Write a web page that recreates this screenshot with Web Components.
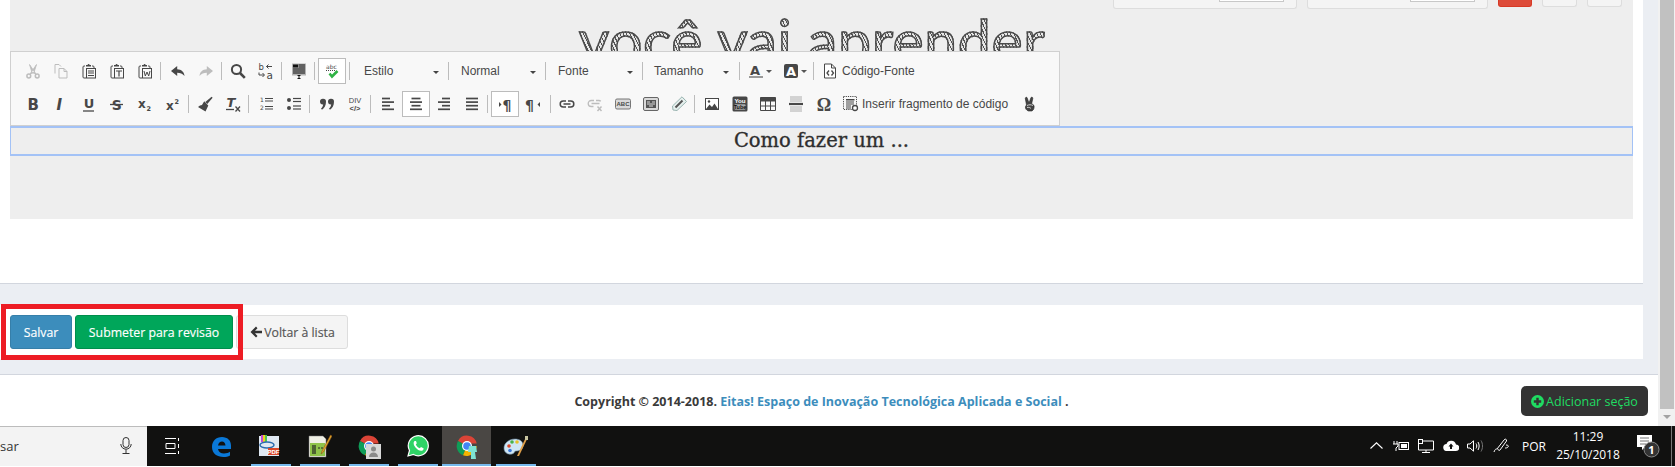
<!DOCTYPE html>
<html lang="pt"><head><meta charset="utf-8"><title>Editor</title>
<style>
html,body{margin:0;padding:0;height:467px;overflow:hidden;background:#fff}
body{font-family:"Open Sans","Noto Sans",sans-serif}
</style></head><body>
<app-shell>
  <page-scroll slot="main">
    <editor-card>
      <top-controls></top-controls>
      <big-heading>você vai aprender</big-heading>
      <editor-toolbar></editor-toolbar>
      <focus-line>Como fazer um ...</focus-line>
    </editor-card>
    <action-panel>
      <action-btn kind="primary">Salvar</action-btn>
      <action-btn kind="success">Submeter para revisão</action-btn>
      <action-btn kind="default" arrow>Voltar à lista</action-btn>
    </action-panel>
    <page-footer></page-footer>
  </page-scroll>
  <scroll-rail slot="main"></scroll-rail>
  <task-bar slot="bar"></task-bar>
</app-shell>
<script>
const T=(x,y,s,t,extra='')=>`<text x="${x}" y="${y}" font-size="${s}" fill="currentColor" stroke="none" ${extra}>${t}</text>`;
const DJ='font-family="DejaVu Sans"';
const lines=(arr,w=1.4)=>arr.map(a=>`<path d="M${a[0]} ${a[2]}H${a[1]}" stroke="currentColor" stroke-width="${a[3]||w}" fill="none"/>`).join('');
const clip=(inner)=>`<path d="M4 3H3a1 1 0 0 0-1 1v10a1 1 0 0 0 1 1h2" fill="none" stroke="currentColor"/><path d="M11 3h1a1 1 0 0 1 1 1v1" fill="none" stroke="currentColor"/><path d="M5 3.500h5V2H8.600a1 1 0 0 0-2 0H5z" fill="currentColor"/><rect x="5.500" y="5.500" width="9" height="9.500" fill="none" stroke="currentColor"/>${inner}`;
const align=(r)=>lines(r.map((v,i)=>[v[0],v[1],2.5+i*3.6]),1.7);
const ICONS={
cut:`<g fill="none" stroke="currentColor" stroke-width="1.500"><circle cx="3.800" cy="13" r="1.900"/><circle cx="12.200" cy="13" r="1.900"/></g><path d="M5 11 11.500 1.500 9 9.500zM11 11 4.500 1.500 7 9.500z" fill="currentColor" stroke="currentColor" stroke-width=".8"/>`,
copy:`<path d="M2 10.500V1.500h4l2 2M6 5.500h5l3 3v6.500H6zM11 5.500v3h3" fill="none" stroke="currentColor"/>`,
paste:clip(lines([[7,13,8],[7,13,10],[7,13,12.500]],1)),
pastet:clip(`<path d="M7 8h6M10 8v5.500" stroke="currentColor" stroke-width="1.200" fill="none"/>`),
pastew:clip(`<path d="M7 8l1.300 5 1.700-4 1.700 4L13 8" stroke="currentColor" stroke-width="1" fill="none"/>`),
undo:`<path d="M7.200 3 1 8l6.200 5V9.700c3 0 5.400.8 7.300 3.300C14.300 9 11.300 6.400 7.200 6.300z" fill="currentColor"/>`,
redo:`<path d="M8.800 3 15 8l-6.200 5V9.700c-3 0-5.400.8-7.300 3.300C1.700 9 4.700 6.400 8.800 6.300z" fill="currentColor"/>`,
find:`<circle cx="6.500" cy="6.500" r="4.600" fill="none" stroke="currentColor" stroke-width="2"/><path d="M10 10l4.800 4.800" stroke="currentColor" stroke-width="2.600"/>`,
replace:T(0.500,7,8.500,'b',DJ)+T(8.500,15.500,10.500,'a',DJ)+`<path d="M14 3.500H8.500M10.500 1.500 8.500 3.500l2 2M1 9.500v2.500h5M4.500 10l2 2-2 2" fill="none" stroke="currentColor"/>`,
select:`<rect x="1" y=".5" width="14" height="12" fill="#b4b4b4"/>`+`<rect x="2" y="1.500" width="5" height="3" fill="#111"/>`+lines([[7.500,14,2],[7.500,14,4],[2,14,6],[2,14,8],[2,14,10]],1).replace(/currentColor/g,'#111')+`<path d="M6.500 12.500h3M8 12.500v3M6.500 15.500h3" stroke="#111" fill="none"/>`,
spell:T(2,5.500,6,'abc',DJ)+`<path d="M2 7.500h10" stroke="currentColor" stroke-dasharray="1 1"/><path d="M5.500 10.500 8 13.500 13.500 8" stroke="#2fb344" stroke-width="2.600" fill="none"/>`,
bold:T(2.500,14,15,'B',DJ+' font-weight="bold"'),
italic:T(3.500,14,15,'I',DJ+' font-weight="bold" font-style="italic"'),
underline:T(2.800,12,13,'U',DJ+' font-weight="bold"')+`<path d="M2 15h11" stroke="currentColor" stroke-width="1.300"/>`,
strike:T(2.800,14,14,'S',DJ+' font-weight="bold"')+`<path d="M1 8.500h13" stroke="currentColor" stroke-width="1.300"/>`,
sub:T(1,12,12,'x',DJ+' font-weight="bold"')+T(9.500,15,6.500,'2',DJ+' font-weight="bold"'),
sup:T(1,14,12,'x',DJ+' font-weight="bold"')+T(9.500,8,6.500,'2',DJ+' font-weight="bold"'),
brush:`<path d="M14.600 .8l1 1L10.300 8 8.300 6z" fill="currentColor"/><path d="M7.200 5.300 11.300 9.400l-2.800 6L1 11l2-1.500 2-.5z" fill="currentColor"/>`,
clear:T(1.500,11,13,'T',DJ+' font-weight="bold" font-style="italic"')+`<path d="M1 13.500h8" stroke="currentColor" stroke-width="1.300"/><path d="M10.500 10.500l4.500 5M15 10.500l-4.500 5" stroke="currentColor" stroke-width="1.300"/>`,
ol:T(2,6,6,'1',DJ)+T(2,14,6,'2',DJ)+lines([[7,15,2.500],[7,15,5],[7,15,10.500],[7,15,13]],1),
ul:`<circle cx="3" cy="4" r="2" fill="currentColor"/><circle cx="3" cy="12" r="2" fill="currentColor"/>`+lines([[7,15,2.500],[7,15,5.500],[7,15,10],[7,15,13]],1.200),
quote:`<path d="M1 5.500a3 3 0 1 1 6 .3c0 3.200-1.500 6.500-4 8L2 12.500c1.300-1 2-2.500 2.200-4A3 3 0 0 1 1 5.500zM9 5.500a3 3 0 1 1 6 .3c0 3.200-1.500 6.500-4 8L10 12.500c1.300-1 2-2.500 2.200-4A3 3 0 0 1 9 5.500z" fill="currentColor"/>`,
div:`<text x="8" y="7" text-anchor="middle" font-size="7.500" font-family="Liberation Sans" fill="currentColor">DIV</text><text x="8" y="15" text-anchor="middle" font-size="7.500" font-family="Liberation Sans" font-weight="bold" fill="currentColor">&lt;/&gt;</text>`,
left:align([[2,10],[2,14],[2,10],[2,14]]),
center:align([[3.500,12.500],[2,14],[3.500,12.500],[2,14]]),
right:align([[6,14],[2,14],[6,14],[2,14]]),
justify:align([[2,14],[2,14],[2,14],[2,14]]),
ltr:`<path d="M2 6l2.500 2.500L2 11z" fill="currentColor"/>`+T(5.500,13.500,14,'¶',DJ+' font-weight="bold"'),
rtl:T(0,13.500,14,'¶',DJ+' font-weight="bold"')+`<path d="M15 6l-2.500 2.500L15 11z" fill="currentColor"/>`,
link:`<path d="M7 5H4.200a3 3 0 0 0 0 6H7M9 5h2.800a3 3 0 0 1 0 6H9M4.500 8h7" fill="none" stroke="currentColor" stroke-width="1.500"/>`,
unlink:`<path d="M7 4.500H4.200a3 3 0 0 0 0 6H6.500M9 4.500h2.800a3 3 0 0 1 2 .8M4.500 7.500h8" fill="none" stroke="currentColor" stroke-width="1.300"/><path d="M10.500 10.500l4 4.500M14.500 10.500l-4 4.500" stroke="currentColor" stroke-width="1.500"/>`,
abc:`<rect x=".5" y="3" width="15" height="10" rx="1.500" fill="#d9d9d9" stroke="#777"/><text x="8" y="10.300" text-anchor="middle" font-size="6" font-family="Liberation Sans" font-weight="bold" fill="currentColor">ABC</text>`,
box:`<rect x=".5" y="1.500" width="15" height="13" rx="1.500" fill="#d9d9d9" stroke="#666"/><rect x="3" y="4" width="10" height="8" fill="#555"/><path d="M4 6h3M9 6h3M4 8h8M6 10h4" stroke="#ddd"/>`,
pin:`<path d="M2 14 1.500 10 11 .8 15.500 5.500 6 14.500z" fill="#e6f0ee" stroke="#9ab5b2"/><path d="M4.500 11.500 11.500 4.500" stroke="#555" stroke-width="2"/><path d="M12 2l2 2" stroke="#9ab5b2"/>`,
image:`<rect x="1" y="2" width="14" height="12" fill="currentColor"/><rect x="2" y="3" width="12" height="10" fill="#fff"/><path d="M2 13l3.500-4.500L8 11l2.500-3.500L14 13z" fill="currentColor"/><circle cx="5" cy="5.500" r="1.200" fill="currentColor"/>`,
youtube:`<rect x=".5" y=".5" width="15" height="15" rx="1.500" fill="currentColor"/><rect x="2.500" y="8.300" width="11" height="5.500" rx="1" fill="#aaa"/>`+`<text x="8" y="6.500" text-anchor="middle" font-size="6.200" fill="#fff" font-family="Liberation Sans" font-weight="bold">You</text><text x="8" y="13" text-anchor="middle" font-size="5.500" fill="#111" font-family="Liberation Sans" font-weight="bold">Tube</text>`,
table:`<path d="M.5 1.500h15v13H.5z" fill="none" stroke="currentColor"/><path d="M.5 1.500h15v4H.5z" fill="currentColor"/><path d="M5.500 5v9M10.500 5v9M1 10h14" stroke="currentColor" fill="none"/>`,
hr:`<path d="M2 1h12M2 3h12M2 5h12M2 11h12M2 13h12M2 15h12" stroke="#999" stroke-width=".8" fill="none"/>`+lines([[1,15,8,2.200]]),
omega:`<text x="8" y="14.500" text-anchor="middle" font-size="18" font-family="Liberation Serif" font-weight="bold" fill="currentColor">Ω</text>`,
snippet:`<rect x=".5" y=".5" width="13" height="13" fill="none" stroke="currentColor" stroke-dasharray="1.200 1"/><rect x="3" y="3" width="8.500" height="1.500" fill="currentColor"/>`+lines([[3,11,6],[3,11,8],[3,8,10],[3,8,12]],1)+`<circle cx="12" cy="12" r="2.500" fill="#fff" stroke="currentColor" stroke-width="1.300"/>`,
peace:`<path d="M5 1.500 7 7l2-5.500c1-.7 2 0 1.800 1L9.700 7.500 12 9.500c.5 2-.3 4.500-2 5.500H6.500c-2-.5-3.500-2.500-3-4.500l1-1.500L3.300 2.500c0-1 1-1.500 1.700-1z" fill="#444" stroke="#222" stroke-width=".6"/><path d="M5 9.500c2-1 4-1 6 0M5 11.500c1.500-.5 3 0 4 1" stroke="#ccc" fill="none"/>`,
source:`<path d="M2.500 1h7l4 4v10h-11zM9.500 1v4h4" fill="#fff" stroke="currentColor"/><path d="M7 7.500 5 10l2 2.500M9.500 7.500l2 2.500-2 2.500" fill="none" stroke="currentColor" stroke-width="1.300"/>`,
fore:T(2,11.500,13,'A',DJ+' font-weight="bold"')+`<rect x="1" y="13" width="14" height="2" fill="#999"/>`,
back:`<rect x="1" y="1" width="14" height="14" rx="2" fill="currentColor"/><text x="8" y="12.500" text-anchor="middle" font-size="13" font-family="DejaVu Sans" font-weight="bold" fill="#fff">A</text>`
};
const def=(name,css,html,init)=>{customElements.define(name,class extends HTMLElement{
  connectedCallback(){ if(this.shadowRoot)return; const r=this.attachShadow({mode:'open'});
    r.innerHTML=`<style>${css}</style>`+(typeof html==='function'?html(this):html); init&&init(this,r);} });};

def('tool-btn',`:host{display:flex;align-items:center;justify-content:center;gap:4px;height:26px;min-width:28px;box-sizing:border-box;color:#474747;font:12px "Liberation Sans",sans-serif;flex:none}
:host([off]){color:#bdbdbd}
:host([on]){background:#fff;box-shadow:inset 0 0 0 1px #bcbcbc}
:host([arrow]){width:35px;justify-content:flex-start;padding-left:7px;gap:2px}
:host([label]){padding:0 6px}
svg{width:16px;height:16px;flex:none;display:block;overflow:visible}
.car{width:0;height:0;border:3px solid transparent;border-top-color:#555;border-bottom:0;flex:none}
span{white-space:nowrap}`,
 h=>`<svg viewBox="0 0 16 16" aria-hidden="true">${ICONS[h.getAttribute('icon')]||''}</svg>`+
   (h.hasAttribute('arrow')?'<i class="car"></i>':'')+
   (h.getAttribute('label')?`<span>${h.getAttribute('label')}</span>`:''));

def('tool-sep',`:host{display:block;width:1px;height:18px;background:#bcbcbc;margin:0 3px 0 1px;flex:none}`,'');
def('tool-combo',`:host{display:flex;align-items:center;width:96px;box-sizing:border-box;height:26px;padding:0 9px 0 12px;font:12px "Liberation Sans",sans-serif;color:#484848;justify-content:space-between;flex:none}
i{width:0;height:0;border:3px solid transparent;border-top-color:#444;border-bottom:0;margin-top:2px}`,
 h=>`<span><slot></slot></span><i></i>`);
def('tool-row',`:host{display:flex;align-items:center;height:26px}`,'<slot></slot>');

const btn=(i,a='')=>`<tool-btn icon="${i}" ${a}></tool-btn>`;
const sep='<tool-sep></tool-sep>';
const sm='<tool-sep style="margin:0 2px 0 1px"></tool-sep>';
const s0='<tool-sep style="margin:0"></tool-sep>';
def('editor-toolbar',`:host{display:flex;flex-direction:column;gap:7px;width:1050px;height:75px;box-sizing:border-box;background:#f8f8f8;border:1px solid #d0d0d0;padding:6px 9px 0 8px}`,
`<tool-row>${btn('cut','off')}${btn('copy','off')}${btn('paste')}${btn('pastet')}${btn('pastew')}${sep}${btn('undo')}${btn('redo','off')}${sm}${btn('find')}${btn('replace')}${sep}${btn('select')}${sep}${btn('spell','on')}<tool-sep style="margin:0 0 0 3px"></tool-sep><tool-combo style="margin-left:2px">Estilo</tool-combo>${s0}<tool-combo>Normal</tool-combo>${s0}<tool-combo>Fonte</tool-combo>${s0}<tool-combo style="width:95px;padding-left:11px">Tamanho</tool-combo><tool-sep style="margin:0 1px"></tool-sep>${btn('fore','arrow')}<tool-btn icon="back" arrow style="width:36px"></tool-btn><tool-sep style="margin:0 2px 0 1px"></tool-sep><tool-btn icon="source" label="Código-Fonte"></tool-btn></tool-row>
<tool-row>${btn('bold')}${btn('italic')}${btn('underline')}${btn('strike')}${btn('sub')}${btn('sup')}${sm}${btn('brush')}${btn('clear')}${sep}${btn('ol')}${btn('ul')}${sep}${btn('quote')}${btn('div')}${sep}${btn('left')}${btn('center','on')}${btn('right')}${btn('justify')}${sep}${btn('ltr','on')}${btn('rtl')}<tool-sep style="margin:0 2px 0 3px"></tool-sep>${btn('link')}${btn('unlink','off')}${btn('abc')}${btn('box')}${btn('pin')}${sep}${btn('image')}${btn('youtube')}${btn('table')}${btn('hr')}${btn('omega')}<tool-btn icon="snippet" label="Inserir fragmento de código" style="padding:0 6px 0 5px;gap:3px"></tool-btn><tool-btn icon="peace" style="margin-left:2px"></tool-btn></tool-row>`);

def('top-controls',`:host{display:flex;justify-content:flex-end;align-items:flex-start;height:9px;overflow:hidden;padding-right:11px}
.c{height:9px;box-sizing:border-box;border:1px solid #ddd;border-top:0;border-radius:0 0 3px 3px;background:#f4f4f4;display:flex;justify-content:flex-end;padding-right:12px}
.c b{display:block;width:65px;height:2px;box-sizing:border-box;background:#fff;border:1px solid #c8c8c8;border-top:0}
.b{height:7px;width:35px;box-sizing:border-box;border:1px solid #ddd;border-top:0;border-radius:0 0 3px 3px;background:#f4f4f4;margin-left:10px}
.r{background:#dd4b39;border-color:#d73925;width:34px}`,
`<div class="c" style="width:184px"><b></b></div><div class="c" style="width:181px;margin-left:10px"><b></b></div><div class="b r"></div><div class="b"></div><div class="b"></div>`);

def('big-heading',`:host{display:block;height:42px;overflow:hidden;text-align:center;font:400 59px/62px "Lato",sans-serif;padding-right:19px;box-sizing:border-box}
span{color:transparent;-webkit-text-stroke:1.500px #4a4a4a;background:repeating-linear-gradient(65deg,#555 0 1px,#e8e8e8 1px 3px);-webkit-background-clip:text;background-clip:text;letter-spacing:.6px}`,
`<span><slot></slot></span>`);

def('focus-line',`:host{display:block;height:30px;box-sizing:border-box;border:1px solid #a3c2f6;border-width:2px 1px;text-align:center;font:19.500px/26px "DejaVu Serif",serif;-webkit-text-stroke:.35px #2e2e2e;color:#2e2e2e;background:#eee}`,'<slot></slot>');

def('editor-card',`:host{display:block;box-sizing:border-box;width:1643px;height:284px;background:#fff;border-bottom:1px solid #d2d6de;padding:0 10px;flex:none}
.s{height:219px;background:#eee}`,`<div class="s"><slot></slot></div>`);

def('action-btn',`:host{display:flex;align-items:center;justify-content:center;height:34px;box-sizing:border-box;border:1px solid;border-radius:3px;font:12.300px "Open Sans",sans-serif;-webkit-text-stroke:.15px currentColor;white-space:nowrap;flex:none;gap:1px}
:host([kind=primary]){background:#3c8dbc;border-color:#367fa9;color:#fff;width:62px}
:host([kind=success]){background:#00a65a;border-color:#008d4c;color:#fff;width:158px}
:host([kind=default]){background:#f4f4f4;border-color:#ddd;color:#555;width:112px}
svg{width:14px;height:14px}`,
 h=>(h.hasAttribute('arrow')?`<svg viewBox="0 0 14 14"><path d="M7 1.500 1.500 7 7 12.500l1.500-1.500L6 8.300h7V5.700H6l2.500-2.500z" fill="#333"/></svg>`:'')+`<slot></slot>`);

def('action-panel',`:host{display:flex;position:relative;gap:3px;box-sizing:border-box;width:1643px;height:54px;margin-top:21px;padding:10px;background:#fff;flex:none}
.mark{position:absolute;left:1px;top:-1px;width:242px;height:56px;box-sizing:border-box;border:5px solid #ed1c24;pointer-events:none}`,
`<slot></slot><div class="mark"></div>`);

def('page-footer',`:host{display:block;position:relative;box-sizing:border-box;width:1658px;height:52px;margin-top:15px;background:#fff;border-top:1px solid #d2d6de;flex:none}
p{margin:0;width:1643px;text-align:center;font:bold 12.500px/54px "Open Sans",sans-serif;color:#3a3a3a}
a{color:#3c8dbc;text-decoration:none}
button{position:absolute;left:1521px;top:11px;width:127px;height:30px;box-sizing:border-box;border:0;border-radius:5px;background:#333;color:#1fdc62;font:12.500px "Open Sans",sans-serif;padding:0;display:flex;align-items:center;justify-content:center;gap:2px}
svg{width:13px;height:13px}`,
`<p>Copyright © 2014-2018. <a>Eitas! Espaço de Inovação Tecnológica Aplicada e Social</a> .</p>
<button><svg viewBox="0 0 14 14"><circle cx="7" cy="7" r="7" fill="#1fdc62"/><path d="M3 7h8M7 3v8" stroke="#333" stroke-width="2.600"/></svg>Adicionar seção</button>`);

def('page-scroll',`:host{display:flex;flex-direction:column;width:1658px;height:426px;background:#ebeef3;overflow:hidden;flex:none}`,'<slot></slot>');
def('scroll-rail',`:host{display:flex;flex-direction:column;align-items:center;width:17px;height:426px;background:#f1f1f1;flex:none}
.t{width:14px;height:409px;background:#c1c1c1;margin-left:1px}
.a{width:0;height:0;border:4px solid transparent;border-top:4px solid #a3a3a3;border-bottom:0;margin-top:6px}`,`<div class="t"></div><div class="a"></div>`);
def('app-shell',`:host{display:flex;flex-direction:column;width:1675px;height:467px}
.m{display:flex;height:426px}`,`<div class="m"><slot name="main"></slot></div><slot name="bar"></slot>`);

const chrome=`<svg width="22" height="22" viewBox="0 0 22 22"><path d="M11 11 2 6a10 10 0 0 1 18.700 2.500H11z" fill="#db4437"/><path d="M11 11 2 6a10 10 0 0 0 5 14.300z" fill="#0f9d58"/><path d="M11 11H20.700A10 10 0 0 1 7 20.300z" fill="#f4b400"/><circle cx="11" cy="11" r="5" fill="#fff"/><circle cx="11" cy="11" r="3.800" fill="#4285f4"/>`;
const APPS=[
 [`<svg width="16" height="16" viewBox="0 0 16 16"><path d="M0 .500h11M0 15.500h11M1 5.500h9v5H1zM13.500 0v3M13.500 6v4M13.500 13v3" stroke="#fff" fill="none"/></svg>`,0],
 [`<svg width="21" height="21" viewBox="0 0 21 21"><path d="M1 11C1 5 5 1 11 1c5.500 0 9 3.500 9 8.500V13H7c.5 3 3 4.500 6 4.500 2.500 0 4.500-.7 6-1.700v3.700c-1.800 1-4 1.500-6.500 1.500C6 21 1 17.500 1 11zm6-1.500h7.500C14.300 7 12.800 5.500 11 5.500c-2 0-3.500 1.500-4 4z" fill="#0a78d7"/></svg>`,0],
 [`<svg style="margin-right:3px" width="22" height="22" viewBox="0 0 22 22"><rect x="1" y="1" width="20" height="20" fill="#dfe8f2"/><rect x="3" y="0" width="2" height="7" fill="#c44ad0"/><rect x="5" y="0" width="2" height="7" fill="#f3d21c"/><rect x="7" y="0" width="2" height="7" fill="#4ec34e"/><ellipse cx="9" cy="10" rx="7" ry="3" fill="none" stroke="#2b6cb0" stroke-width="1.500"/><rect x="10" y="13" width="11" height="7" fill="#d9482b"/><text x="15.500" y="19" text-anchor="middle" font-size="6" fill="#fff" font-weight="bold" font-family="Liberation Sans">PDF</text></svg>`,1],
 [`<svg width="24" height="24" viewBox="0 0 24 24"><path d="M1 2h14l3 3v18H1z" fill="#efefe4" stroke="#777" stroke-width=".5"/><rect x="2" y="9" width="15" height="13" fill="#8fc34a"/><path d="M5 11v9M7 11v9M10 14h2M13 14h2" stroke="#222" stroke-width="1.200"/><path d="M22.500 1 14 17l-1 3 2.500-2L24 2z" fill="#e2a52a" stroke="#7b4a1a" stroke-width=".5"/></svg>`,1],
 [chrome+`</svg><svg style="position:absolute;margin:10px 0 0 10px" width="15" height="15" viewBox="0 0 15 15"><rect width="15" height="15" fill="#d8d8d8"/><circle cx="7.500" cy="5" r="2.500" fill="#8a8a8a"/><path d="M3 13c0-3 2-4.500 4.500-4.500S12 10 12 13z" fill="#8a8a8a"/></svg>`,1],
 [`<svg width="22" height="22" viewBox="0 0 22 22"><path d="M1 21l1.500-5.500A10 10 0 1 1 6.500 19.500z" fill="#2fd366" stroke="#fff" stroke-width="1.200"/><path d="M7.500 6c-1.500 1.500-1 4 1 6.500s5 4 7 3c1-.6 1.300-1.700 1-2.200l-2.500-1.300-1.200 1.300c-1.500-.5-3.200-2-4-3.800l1-1.200L9 6z" fill="#fff"/></svg>`,1],
 [chrome+`</svg><svg style="position:absolute;margin:12px 0 0 12px" width="10" height="13" viewBox="0 0 10 13"><path d="M1 0h7l1 6H7l1 7H3l0-7H0z" fill="#7de3d4"/></svg>`,2],
 [`<svg width="26" height="22" viewBox="0 0 26 22"><path d="M12 4C6 4 1 8 1 13c0 4 3 7 8 6 3-.6 2-3 4-3 3 0 7-1 7-6 0-4-4-6-8-6z" fill="#cfe6f5" stroke="#6d8aa0" stroke-width=".6"/><circle cx="6" cy="11" r="1.800" fill="#d9482b"/><circle cx="9" cy="7" r="1.800" fill="#49b24a"/><circle cx="14" cy="7" r="1.800" fill="#e8c12a"/><circle cx="7" cy="15.500" r="1.800" fill="#3c78d8"/><path d="M23.500 1 14 21l2 0L25 2z" fill="#e0a04a"/><path d="M22 1h3v4h-3z" fill="#c8c4a0"/></svg>`,1]
];
def('task-bar',`:host{display:flex;height:40px;margin-bottom:1px;background:#111110;color:#fff;font:13px "Open Sans",sans-serif}
.s{width:147px;flex:none;background:#f3f3f3;border-top:1px solid #bcbcbc;box-sizing:border-box;color:#333;display:flex;align-items:center;justify-content:space-between;padding:0 15px 2px 0;font:13px "Open Sans",sans-serif}
.apps{display:flex;padding-left:1px}
.a{width:49px;height:40px;display:flex;align-items:center;justify-content:center;position:relative;box-sizing:border-box}
.a.u::after{content:"";position:absolute;left:4.500px;right:4.500px;bottom:0;height:2px;background:#76b9ed}
.a.act{background:#4a4744}
.a.act::after{content:"";position:absolute;left:0;right:0;bottom:0;height:2px;background:#76b9ed}
.tray{margin-left:auto;display:flex;align-items:center;height:40px}
.i{width:24.600px;display:flex;justify-content:center;align-items:center;margin-top:-1px}
.lang{width:40px;text-align:center;font-size:12px}
.clock{width:68px;text-align:center;font-size:12px;line-height:18px;margin-right:3px}
.n{width:45px;position:relative;display:flex;justify-content:center}
.end{width:1px;height:40px;background:#777;margin:0 3px 0 1px}`,
`<div class="s"><span>sar</span><svg width="12" height="17" viewBox="0 0 12 17"><rect x="3" y=".5" width="6" height="10" rx="3" fill="none" stroke="#333"/><path d="M.8 7a5.200 5.200 0 0 0 10.400 0M6 12.500V16M2.500 16.500h7" fill="none" stroke="#333"/></svg></div>
<div class="apps">${APPS.map(a=>`<div class="a ${a[1]==1?'u':''} ${a[1]==2?'act':''}">${a[0]}</div>`).join('')}</div>
<div class="tray">
<div class="i"><svg width="13" height="7" viewBox="0 0 13 7"><path d="M.5 6.500 6.500.8l6 5.700" fill="none" stroke="#fff" stroke-width="1.100"/></svg></div>
<div class="i"><svg width="16" height="12" viewBox="0 0 16 12"><rect x="6" y="2.500" width="9.500" height="7" fill="none" stroke="#fff"/><rect x="8" y="4" width="6" height="4" fill="#fff"/><path d="M1 1v3M4 1v3M0 4h5v2L3 8v3" stroke="#fff" fill="none"/></svg></div>
<div class="i"><svg width="16" height="14" viewBox="0 0 16 14"><path d="M4 2h11.500v9h-15V5M8 11v2.500M4 13.500h8" stroke="#fff" fill="none"/><rect x=".5" y=".5" width="4" height="4" fill="#111" stroke="#fff"/></svg></div>
<div class="i"><svg width="16" height="11" viewBox="0 0 16 11"><path d="M4 11a3.500 3.500 0 0 1-.5-7A5 5 0 0 1 13 4.500a3.200 3.200 0 0 1 0 6.500z" fill="#fff"/><path d="M8 3.500 5.500 6.500h1.500V9h2V6.500h1.500z" fill="#111"/></svg></div>
<div class="i"><svg width="16" height="12" viewBox="0 0 16 12"><path d="M.5 4h2.500L6.500.8v10.400L3 8H.5z" fill="none" stroke="#fff"/><path d="M9 3.500c1 1.500 1 3.500 0 5M11 2c1.500 2.500 1.500 5.500 0 8" fill="none" stroke="#fff"/><path d="M14 .5c2 3 2 8 0 11" fill="none" stroke="#777"/></svg></div>
<div class="i" style="margin-left:2px"><svg width="17" height="15" viewBox="0 0 17 15"><path d="M1 14c1-3 2-3 3-3L11 2c1-1.500 3-1 2.500 1L7 12c-1 1-2 0-2-1M13 7c2 0 3 1 2 2s-2 1-3 1" fill="none" stroke="#fff"/></svg></div>
<div class="lang">POR</div>
<div class="clock">11:29<br>25/10/2018</div>
<div class="n"><svg width="24" height="24" viewBox="0 0 24 24"><path d="M1 1h15v12H9l-3 3v-3H1z" fill="#fff"/><path d="M4 4h9M4 7h9M4 10h6" stroke="#777"/><circle cx="15.500" cy="15.500" r="7.500" fill="#333" stroke="#888"/><text x="15.500" y="19.500" text-anchor="middle" font-size="11" fill="#fff" font-family="Open Sans" font-weight="bold">1</text></svg></div>
<div class="end"></div>
</div>`);
</script>
</body></html>
